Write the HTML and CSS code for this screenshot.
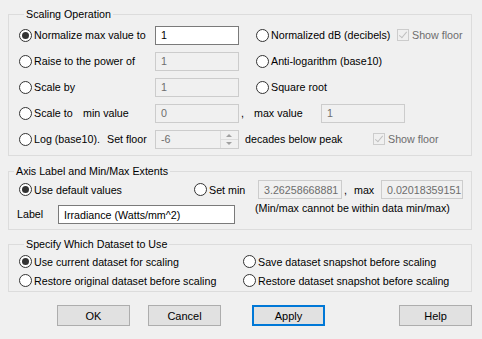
FILE: index.html
```html
<!DOCTYPE html>
<html lang="en">
<head>
    <meta charset="UTF-8">
    <title>Scaling</title>
    <link rel="stylesheet" href="styles.css">
</head>
<body>
    <div class="dialog">
        <fieldset class="group scaling">
            <legend>Scaling Operation</legend>
            <div class="op-row">
                <label class="opt w-left"><span class="radio on"></span>Normalize max value to</label>
                <span class="field active w84">1</span>
                <label class="opt w-right"><span class="radio"></span>Normalized dB (decibels)</label>
                <span class="check"></span><span class="dim">Show floor</span>
            </div>
            <div class="op-row">
                <label class="opt w-left"><span class="radio"></span>Raise to the power of</label>
                <span class="field w84">1</span>
                <label class="opt w-right"><span class="radio"></span>Anti-logarithm (base10)</label>
            </div>
            <div class="op-row">
                <label class="opt w-left"><span class="radio"></span>Scale by</label>
                <span class="field w84">1</span>
                <label class="opt w-right"><span class="radio"></span>Square root</label>
            </div>
            <div class="op-row">
                <label class="opt w-scale"><span class="radio"></span>Scale to</label>
                <span class="w-minval">min value</span>
                <span class="field w84">0</span>
                <span class="comma">,</span>
                <span class="w-maxval">max value</span>
                <span class="field w84">1</span>
            </div>
            <div class="op-row">
                <label class="opt w-log"><span class="radio"></span>Log (base10).</label>
                <span class="w-floor">Set floor</span>
                <span class="field w84 spin">-6<span class="spinner"><span class="up"></span><span class="down"></span></span></span>
                <span class="w-decades">decades below peak</span>
                <span class="check"></span><span class="dim">Show floor</span>
            </div>
        </fieldset>

        <fieldset class="group axis">
            <legend>Axis Label and Min/Max Extents</legend>
            <div class="axis-row">
                <label class="opt w-default"><span class="radio on"></span>Use default values</label>
                <label class="opt w-setmin"><span class="radio"></span>Set min</label>
                <span class="field w84">3.26258668881</span>
                <span class="comma small">,</span>
                <span class="w-max">max</span>
                <span class="field w82">0.02018359151</span>
            </div>
            <div class="label-row">
                <span class="w-label">Label</span>
                <span class="field active w177">Irradiance (Watts/mm^2)</span>
                <span class="note">(Min/max cannot be within data min/max)</span>
            </div>
        </fieldset>

        <fieldset class="group dataset">
            <legend>Specify Which Dataset to Use</legend>
            <div class="ds-grid">
                <label class="opt"><span class="radio on"></span>Use current dataset for scaling</label>
                <label class="opt"><span class="radio"></span>Save dataset snapshot before scaling</label>
                <label class="opt"><span class="radio"></span>Restore original dataset before scaling</label>
                <label class="opt"><span class="radio"></span>Restore dataset snapshot before scaling</label>
            </div>
        </fieldset>

        <div class="buttons">
            <button>OK</button>
            <button>Cancel</button>
            <button class="default">Apply</button>
            <button class="help">Help</button>
        </div>
    </div>
</body>
</html>
```

FILE: styles.css
```css
body {
    margin: 0;
    background-color: #f0f0f0;
    font-family: "Liberation Sans", Arial, sans-serif;
    font-size: 10.7px;
    color: #000000;
}
.dialog {
    width: 482px;
    height: 339px;
    padding: 7px 10px 0 8px;
    box-sizing: border-box;
}
.group {
    margin: 0;
    padding: 0;
    border: 1px solid #dcdcdc;
    min-width: 0;
}
.group legend {
    padding: 0 2px;
    margin-left: 5px;
    line-height: 14px;
}
.scaling {
    padding: 0 0 3px 10px;
}
.op-row {
    display: flex;
    align-items: center;
    height: 26px;
}
.op-row:first-of-type {
    margin-top: 1px;
}
.opt {
    display: flex;
    align-items: center;
    white-space: nowrap;
}
.radio {
    width: 13px;
    height: 13px;
    border: 1px solid #333333;
    border-radius: 50%;
    background: #ffffff;
    box-sizing: border-box;
    margin-right: 2px;
    flex: none;
    position: relative;
}
.radio.on::after {
    content: "";
    position: absolute;
    left: 2px;
    top: 2px;
    width: 7px;
    height: 7px;
    border-radius: 50%;
    background: #333333;
}
.field {
    display: flex;
    align-items: center;
    height: 19px;
    box-sizing: border-box;
    border: 1px solid #cccccc;
    background: #f0f0f0;
    color: #6d6d6d;
    padding-left: 5px;
    white-space: nowrap;
    overflow: hidden;
    flex: none;
}
.field.active {
    border-color: #7a7a7a;
    background: #ffffff;
    color: #000000;
}
.w84 { width: 84px; }
.w82 { width: 82px; }
.w177 { width: 177px; }
.w-left { width: 136px; }
.w-right { width: 141px; margin-left: 17px; }
.w-scale { width: 64px; }
.w-minval { width: 72px; }
.w-log { width: 88px; }
.w-floor { width: 48px; }
.comma { margin-left: 2px; width: 13px; }
.comma.small { width: 10px; }
.w-maxval { width: 67px; }
.w-decades { width: 128px; margin-left: 6px; }
.spin {
    position: relative;
}
.spinner {
    position: absolute;
    right: 0;
    top: 0;
    bottom: 0;
    width: 17px;
    border-left: 1px solid #dcdcdc;
    display: flex;
    flex-direction: column;
}
.spinner .up, .spinner .down {
    flex: 1;
    position: relative;
}
.spinner .up {
    border-bottom: 1px solid #dcdcdc;
}
.spinner .up::after, .spinner .down::after {
    content: "";
    position: absolute;
    left: 5px;
    border-left: 3px solid transparent;
    border-right: 3px solid transparent;
}
.spinner .up::after {
    top: 3px;
    border-bottom: 3px solid #a0a0a0;
}
.spinner .down::after {
    top: 2px;
    border-top: 3px solid #a0a0a0;
}
.check {
    width: 12px;
    height: 12px;
    border: 1px solid #cccccc;
    box-sizing: border-box;
    margin-right: 3px;
    position: relative;
    flex: none;
}
.check::after {
    content: "";
    position: absolute;
    left: 3px;
    top: 0;
    width: 3px;
    height: 7px;
    border-right: 1px solid #c0c0c0;
    border-bottom: 1px solid #c0c0c0;
    transform: rotate(40deg);
}
.dim {
    color: #6d6d6d;
    white-space: nowrap;
}
.axis {
    margin-top: 8px;
    padding: 0 0 5px 0;
}
.axis-row {
    display: flex;
    align-items: center;
    height: 21px;
    margin-top: 1px;
    padding-left: 10px;
}
.w-default { width: 175px; }
.w-setmin { width: 64px; }
.w-max { width: 27px; }
.label-row {
    display: flex;
    align-items: flex-start;
    margin-top: 1px;
    padding-left: 8px;
}
.w-label {
    width: 41px;
    line-height: 19px;
    margin-top: 4px;
}
.label-row .field {
    margin-top: 4px;
}
.note {
    margin-left: 20px;
    line-height: 14px;
    white-space: nowrap;
}
.dataset {
    margin-top: 7px;
    padding: 1px 0 1px 10px;
}
.ds-grid {
    display: grid;
    grid-template-columns: 224px 1fr;
    grid-auto-rows: 19px;
    align-items: center;
}
.buttons {
    display: flex;
    margin-top: 13px;
    padding-left: 49px;
}
button {
    font-family: inherit;
    font-size: 11px;
    width: 73px;
    height: 21px;
    background: #e1e1e1;
    border: 1px solid #adadad;
    color: #000000;
    padding: 0;
    margin-right: 18px;
}
button.default {
    border: 2px solid #0078d7;
    margin-left: 13px;
}
button.help {
    margin-left: 56px;
    margin-right: 0;
}
```
